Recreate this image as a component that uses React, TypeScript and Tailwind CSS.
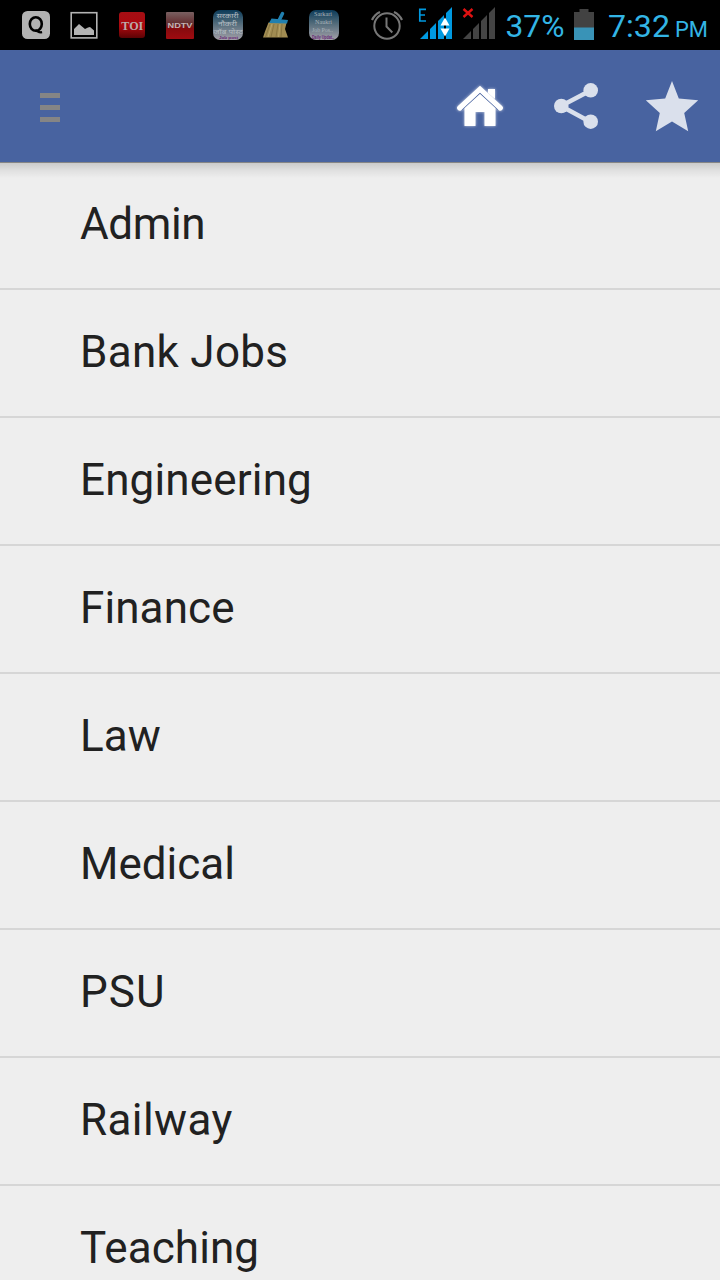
import type { ReactNode } from "react";

const categories = [
  { name: "Admin", tracking: "tracking-[-0.4px]" },
  { name: "Bank Jobs", tracking: "tracking-[0.3px]" },
  { name: "Engineering", tracking: "tracking-[0.15px]" },
  { name: "Finance", tracking: "tracking-[0.1px]" },
  { name: "Law", tracking: "tracking-[0.1px]" },
  { name: "Medical", tracking: "tracking-[0px]" },
  { name: "PSU", tracking: "tracking-[1px]" },
  { name: "Railway", tracking: "tracking-[0.4px]" },
  { name: "Teaching", tracking: "tracking-[0.1px]" },
];

function Slot({ x, w = 48, children }: { x: number; w?: number; children: ReactNode }) {
  return (
    <svg width={w} height={50} viewBox={`${x} 0 ${w} 50`} className="block shrink-0" aria-hidden="true">
      {children}
    </svg>
  );
}

function StatusBar() {
  return (
    <div className="flex h-[50px] shrink-0 overflow-hidden bg-black pl-3 text-[#33b5e5]">
      <Slot x={12}>
        <rect x="22" y="11" width="28" height="28" rx="5.5" fill="#b3b3b3" />
        <ellipse cx="35.8" cy="24" rx="6" ry="6.8" fill="none" stroke="#000" strokeWidth="2.6" />
        <path d="M35.5 30.5c2 0 2.8 2.4 6.6 1.7" fill="none" stroke="#000" strokeWidth="2.3" />
      </Slot>
      <Slot x={60}>
        <rect x="71.2" y="12.7" width="25.6" height="25.2" fill="none" stroke="#b3b3b3" strokeWidth="1.6" />
        <path d="M74 35v-6l5-5 6 5 3-1.500 2-.5 4 3.500V35z" fill="#b3b3b3" />
      </Slot>
      <Slot x={108}>
        <defs>
          <linearGradient id="toi" x2="0" y2="1">
            <stop stopColor="#a40f14" />
            <stop offset=".55" stopColor="#ac080e" />
            <stop offset="1" stopColor="#5c0305" />
          </linearGradient>
        </defs>
        <rect x="119" y="12" width="26" height="26" rx="3" fill="url(#toi)" />
        <text x="121.3" y="29.700" textLength="22" lengthAdjust="spacingAndGlyphs" fontSize="12.500" fontWeight="700" fill="#bcaaa9" className="font-['Liberation_Serif',serif]">TOI</text>
      </Slot>
      <Slot x={156}>
        <defs>
          <linearGradient id="ndtv" x2="0" y2="1">
            <stop stopColor="#796061" />
            <stop offset=".45" stopColor="#632b2d" />
            <stop offset=".6" stopColor="#850b0e" />
            <stop offset="1" stopColor="#a00b10" />
          </linearGradient>
        </defs>
        <rect x="166" y="12" width="28" height="27" rx="1" fill="url(#ndtv)" />
        <text x="167.5" y="28" textLength="25" lengthAdjust="spacingAndGlyphs" fontSize="7.500" fontWeight="700" fill="#c3b5b5" className="font-['Liberation_Sans',sans-serif]">NDTV</text>
      </Slot>
      <Slot x={204}>
        <defs>
          <linearGradient id="job" x2="0" y2="1">
            <stop stopColor="#0b3b59" />
            <stop offset=".45" stopColor="#526b7a" />
            <stop offset="1" stopColor="#a3a0a8" />
          </linearGradient>
        </defs>
        <rect x="213" y="10" width="30" height="30" rx="7" fill="url(#job)" />
        <g fill="#b5bdc3" className="font-['Noto_Sans_Devanagari','Noto_Sans',sans-serif]">
          <text x="216.500" y="18" fontSize="6.500" textLength="22" lengthAdjust="spacingAndGlyphs">सरकारी</text>
          <text x="218" y="26" fontSize="6.500" textLength="19" lengthAdjust="spacingAndGlyphs">नौकरी</text>
          <text x="213.500" y="34" fontSize="6.500" textLength="29" lengthAdjust="spacingAndGlyphs">जॉब पोस्ट</text>
        </g>
        <text x="219" y="38.900" fontSize="4" fontWeight="700" textLength="19" lengthAdjust="spacingAndGlyphs" fill="#652475" className="font-['Liberation_Sans',sans-serif]">Job post</text>
      </Slot>
      <Slot x={252}>
        <path d="M268.500 22.500l18 .5-1.500 6 3 8.500h-25l2-6z" fill="#a18c52" />
        <path d="M270 24l-4.500 13M274 24l-3 13M278 24l-2 13M282 24l-1 13" stroke="#806d3b" strokeWidth=".7" fill="none" />
        <path d="M272 24l-4 13M280 24l-1.500 13" stroke="#c0ad72" strokeWidth=".7" fill="none" />
        <path d="M282.500 13.500l-3.500 7" stroke="#2180af" strokeWidth="3.500" strokeLinecap="round" />
        <path d="M271.500 18.500l16.500 1.500-1 3.500-18-.5z" fill="#2180af" />
      </Slot>
      <Slot x={300}>
        <rect x="309" y="10" width="30" height="30" rx="7" fill="url(#job)" />
        <g fill="#aab4bb" className="font-['Liberation_Serif',serif]">
          <text x="314" y="16.300" fontSize="6.500" textLength="18" lengthAdjust="spacingAndGlyphs">Sarkari</text>
          <text x="315" y="24" fontSize="6.500" textLength="17" lengthAdjust="spacingAndGlyphs">Naukri</text>
          <text x="312" y="32" fontSize="6.500" textLength="21" lengthAdjust="spacingAndGlyphs">Job Pos..</text>
        </g>
        <text x="312" y="38.500" fontSize="4.500" fontWeight="700" textLength="22" lengthAdjust="spacingAndGlyphs" fill="#652475" className="font-['Liberation_Sans',sans-serif]">Daily Updat..</text>
      </Slot>
      <Slot x={348} w={64}>
        <g fill="none" stroke="#777" strokeWidth="2">
          <circle cx="387" cy="26" r="12.700" />
          <path d="M386.500 17.500v9l5.800 6" />
          <path d="M372 20q2.500-5.500 8-8M402 20q-2.500-5.500-8-8" strokeWidth="2.200" />
        </g>
      </Slot>
      <Slot x={412} w={94}>
        <path d="M426 9.400h-6.200v11.600h6.200M420 15h5" fill="none" stroke="#0099e0" strokeWidth="1.700" />
        <path d="M420 39l8-8v8zM430 29l6-6v16h-6zM438 21l6-6v24h-6zM446 13l6-6v32h-6z" fill="#0099e0" />
        <path d="M445 17.500l4.500 8h-9zM445 36.500l4.500-8h-9z" fill="#fff" />
        <path d="M463.500 9l9 8M472.500 9l-9 8" stroke="#df1111" strokeWidth="2.400" />
        <path d="M463 39l8-8v8zM473 29l6-6v16h-6zM481 21l6-6v24h-6zM489 13l6-6v32h-6z" fill="#444" />
      </Slot>
      <Slot x={506} w={62}>
        <text x="505.500" y="36.700" fontSize="32" fill="currentColor" textLength="59" lengthAdjust="spacingAndGlyphs" className="font-['Roboto',sans-serif]">37%</text>
      </Slot>
      <Slot x={568} w={34}>
        <path d="M574 12h5.500V9h9v3h5.500v16h-20z" fill="#424242" />
        <path d="M574 27.500h20V40h-20z" fill="#3993b7" />
      </Slot>
      <Slot x={602} w={118}>
        <g fill="currentColor" className="font-['Roboto',sans-serif]">
          <text x="608" y="36.700" fontSize="32" textLength="62" lengthAdjust="spacingAndGlyphs">7:32</text>
          <text x="675" y="37" fontSize="22.500" textLength="33" lengthAdjust="spacingAndGlyphs">PM</text>
        </g>
      </Slot>
    </div>
  );
}

function Toolbar() {
  return (
    <header className="relative z-10 flex h-28 shrink-0 items-center justify-between bg-[#4863a0] pl-10">
      <button aria-label="Menu" className="mt-0.5 flex w-5 flex-col gap-[7px]">
        <span className="h-[5px] bg-[#858585]" />
        <span className="h-[5px] bg-[#858585]" />
        <span className="h-[5px] bg-[#858585]" />
      </button>
      <nav className="flex h-full">
        <button aria-label="Home">
          <svg width="96" height="112" viewBox="432 50 96 112" className="[filter:drop-shadow(0_0_1.500px_rgba(255,255,255,0.7))]">
            <path d="M464.500 106.500l15.500-13 15.500 13v19.500h-11V112h-9v14h-11z" fill="#fff" />
            <path d="M488 89h7v10l-7-6z" fill="#fff" />
            <path d="M462 109.500L480 93.200l18 16.300" stroke="#4863a0" strokeWidth="1.100" fill="none" />
            <path d="M459.700 108L480 89.200l20.300 18.800" stroke="#fff" strokeWidth="5.200" strokeLinecap="round" fill="none" />
          </svg>
        </button>
        <button aria-label="Share">
          <svg width="96" height="112" viewBox="528 50 96 112" fill="#dae0ec">
            <path d="M590.500 90.500L561 106l29.500 16" stroke="#dae0ec" strokeWidth="4.500" fill="none" />
            <circle cx="561.300" cy="106" r="7.300" />
            <circle cx="590.700" cy="90.300" r="7.300" />
            <circle cx="590.700" cy="121.700" r="7.300" />
          </svg>
        </button>
        <button aria-label="Favourite">
          <svg width="96" height="112" viewBox="624 50 96 112" fill="#dae0ec">
            <path d="M672 81l6.800 17.400 19.400 1.900-14 12.700 4 18.200-16.200-9.700-16.200 9.700 4-18.200-14-12.700 19.400-1.900z" />
          </svg>
        </button>
      </nav>
      <div className="absolute inset-x-0 top-full h-4 border-t border-[#858585] bg-gradient-to-b from-black/15 via-black/6 to-transparent" />
    </header>
  );
}

export default function App() {
  return (
    <div className="flex h-[1280px] w-[720px] flex-col overflow-hidden bg-[#eeeeee] font-['Roboto',sans-serif]">
      <StatusBar />
      <Toolbar />
      <ul>
        {categories.map(({ name, tracking }) => (
          <li key={name} className={`h-32 border-b-2 border-[#d6d6d6] pt-9 pl-20 text-[44px] leading-[52px] text-[#212121] ${tracking}`}>
            {name}
          </li>
        ))}
      </ul>
    </div>
  );
}
